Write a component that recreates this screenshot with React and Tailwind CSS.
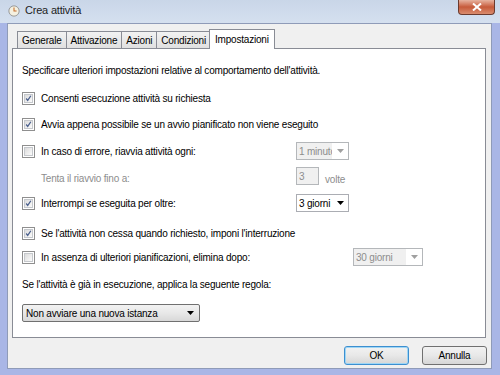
import React from 'react';

const font = { fontFamily: '"Liberation Sans", Arial, sans-serif', letterSpacing: '-0.2px' };

const Check = ({ checked }) => (
  <div className="w-[13px] h-[13px] shrink-0 border border-[#8f8f8f] bg-white p-[1px]">
    <div className="w-full h-full border border-[#c5c8cc] bg-gradient-to-br from-[#dcdcdc] to-[#fbfbfb] flex items-center justify-center">
      {checked && (
        <svg width="9" height="9" viewBox="0 0 9 9">
          <path d="M1.5 4.5 L3.5 7 L7.5 1" fill="none" stroke="#4a5f8c" strokeWidth="1.6" />
        </svg>
      )}
    </div>
  </div>
);

const Arrow = ({ color = '#000' }) => (
  <svg width="7" height="4" viewBox="0 0 7 4">
    <path d="M0 0 H7 L3.5 4 Z" fill={color} />
  </svg>
);

const Combo = ({ value, width, disabled }) => (
  <div
    className={`h-[18px] flex items-center border ${disabled ? 'border-[#b4b7ba] bg-white' : 'border-[#abadb3] bg-white'}`}
    style={{ width }}
  >
    <div className={`flex-1 h-full flex items-center pl-[2px] overflow-hidden whitespace-nowrap ${disabled ? 'bg-[#f0f0f0] text-[#8d8d8d] mr-[1px]' : 'text-black'}`}>
      {value}
    </div>
    <div className="w-[15px] flex items-center justify-center">
      <Arrow color={disabled ? '#a0a0a0' : '#000'} />
    </div>
  </div>
);

const Row = ({ checked, label, className = '', children }) => (
  <div className={`flex items-center h-[18px] ${className}`}>
    <div className="w-[274px] flex items-center gap-[6px] shrink-0">
      <Check checked={checked} />
      <span className="whitespace-nowrap">{label}</span>
    </div>
    {children}
  </div>
);

const Tab = ({ label, active }) =>
  active ? (
    <div className="h-[20px] px-[5px] -ml-[1px] flex items-center bg-white border border-b-0 border-[#898c95] relative z-10 -mb-[1px]">
      {label}
    </div>
  ) : (
    <div className="h-[17px] px-[4px] flex items-center border border-b-0 border-r-0 border-[#898c95] bg-gradient-to-b from-[#f2f2f2] to-[#e0e0e0]">
      {label}
    </div>
  );

const Button = ({ label, focused }) => (
  <div
    className={`w-[65px] h-[19px] flex items-center justify-center rounded-[3px] border ${
      focused ? 'border-[#3c8fd0] shadow-[inset_0_0_0_1px_#9fd6f5]' : 'border-[#707070]'
    } bg-gradient-to-b from-[#f2f2f2] via-[#e8e8e8] to-[#d6d6d6]`}
  >
    {label}
  </div>
);

export default function App() {
  return (
    <div className="w-[500px] h-[375px] overflow-hidden text-[10px] text-black bg-[#a9b6e6]" style={font}>
      {/* title bar */}
      <div className="h-[23px] flex items-start bg-gradient-to-b from-[#c9d6e8] via-[#cfdbec] to-[#d5e0ef] pl-[8px]">
        <div className="flex items-center h-[21px] gap-[5px] text-[11px] text-[#1e1e1e]">
          <svg width="12" height="12" viewBox="0 0 14 14">
            <circle cx="7" cy="7" r="6" fill="#f4f0e0" stroke="#8c8c8c" />
            <path d="M7 3 V7 H10" fill="none" stroke="#c46a2a" strokeWidth="1.2" />
          </svg>
          <span>Crea attività</span>
        </div>
        <div className="flex-1" />
        <div className="w-[37px] h-[15px] mr-[5px] rounded-b-[4px] border border-t-0 border-[#6b3a2e] bg-gradient-to-b from-[#e6b3a0] via-[#c65a3a] to-[#d98c6e] flex items-center justify-center">
          <svg width="10" height="8" viewBox="0 0 10 8">
            <path d="M1 0.5 L9 7.5 M9 0.5 L1 7.5" stroke="#fff" strokeWidth="2" />
          </svg>
        </div>
      </div>

      {/* client area */}
      <div className="ml-[7px] mr-[8px] h-[346px] bg-[#f0f0f0] border border-[#8f9bb8] px-[4px] pt-[5px] flex flex-col">
        {/* tabs */}
        <div className="flex items-end h-[19px] pl-[5px]">
          <Tab label="Generale" />
          <Tab label="Attivazione" />
          <Tab label="Azioni" />
          <Tab label="Condizioni" />
          <Tab label="Impostazioni" active />
        </div>

        {/* panel */}
        <div className="w-[474px] h-[290px] bg-white border border-[#898c95] pl-[9px] flex flex-col">
          <div className="mt-[12px] h-[18px] flex items-center">
            Specificare ulteriori impostazioni relative al comportamento dell'attività.
          </div>
          <Row checked label="Consenti esecuzione attività su richiesta" className="mt-[10px]" />
          <Row checked label="Avvia appena possibile se un avvio pianificato non viene eseguito" className="mt-[8px]" />
          <Row label="In caso di errore, riavvia attività ogni:" className="mt-[9px]">
            <Combo value="1 minuto" width={53} disabled />
          </Row>
          <div className="flex items-end h-[18px] mt-[7px]">
            <div className="w-[274px] pl-[19px] text-[#8d8d8d] leading-none pb-[1px]">Tenta il riavvio fino a:</div>
            <div className="w-[23px] h-[18px] border border-[#b4b7ba] bg-[#f0f0f0] text-[#8d8d8d] pl-[2px] flex items-center">3</div>
            <div className="ml-[6px] text-[#8d8d8d] leading-none">volte</div>
          </div>
          <Row checked label="Interrompi se eseguita per oltre:" className="mt-[9px]">
            <Combo value="3 giorni" width={53} />
          </Row>
          <Row checked label="Se l'attività non cessa quando richiesto, imponi l'interruzione" className="mt-[12px]" />
          <Row label="In assenza di ulteriori pianificazioni, elimina dopo:" className="mt-[6px]">
            <div className="ml-[57px]">
              <Combo value="30 giorni" width={70} disabled />
            </div>
          </Row>
          <div className="mt-[9px] h-[18px] flex items-center">
            Se l'attività è già in esecuzione, applica la seguente regola:
          </div>
          <div className="mt-[11px] w-[178px] h-[18px] rounded-[2px] border border-[#707070] bg-gradient-to-b from-[#f2f2f2] via-[#e8e8e8] to-[#d8d8d8] flex items-center pl-[3px] pr-[5px]">
            <span className="flex-1 whitespace-nowrap">Non avviare una nuova istanza</span>
            <Arrow />
          </div>
        </div>

        {/* buttons */}
        <div className="flex justify-end gap-[13px] mt-[8px]">
          <Button label="OK" focused />
          <Button label="Annulla" />
        </div>
      </div>
    </div>
  );
}
